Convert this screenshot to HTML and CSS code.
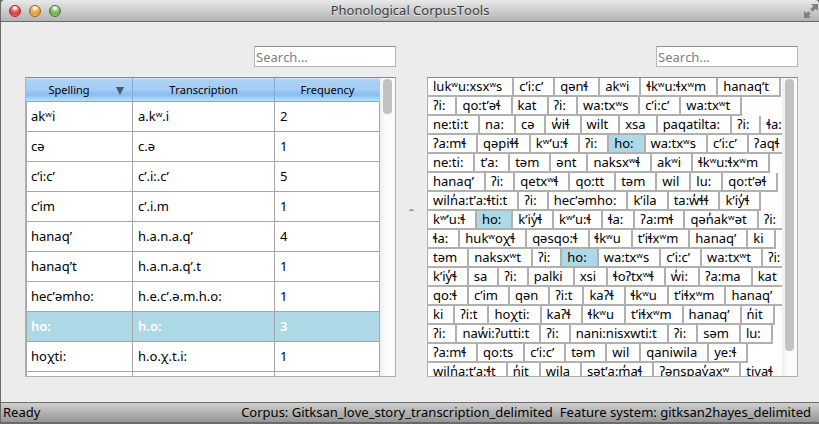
FILE: index.html
```html
<!DOCTYPE html>
<html lang="en">
<head>
<meta charset="utf-8">
<title>Phonological CorpusTools</title>
<link rel="stylesheet" href="styles.css">
</head>
<body>
<div class="window">
  <header class="titlebar">
    <div class="lights">
      <button class="light red" aria-label="Close"></button>
      <button class="light yellow" aria-label="Minimize"></button>
      <button class="light green" aria-label="Zoom"></button>
    </div>
    <h1 class="title">Phonological CorpusTools</h1>
    <button class="fullscreen" aria-label="Full screen">
      <svg width="16" height="16" viewBox="0 0 16 16" fill="#808080"><path d="M8 1h7v7l-2.300-2.300-3 3-2.400-2.400 3-3zM1 8l2.300 2.300 2-2 2.400 2.400-2 2L8 15H1z"/></svg>
    </button>
  </header>
  <main class="content">
    <section class="pane">
      <input class="search" type="text" placeholder="Search..." aria-label="Search corpus">
      <div class="frame">
        <div class="view">
          <table class="corpus">
            <colgroup><col class="c-spell"><col class="c-trans"><col class="c-freq"></colgroup>
            <thead><tr><th class="sorted">Spelling<svg class="arrow" width="10" height="8" viewBox="0 0 10 8"><path d="M1 0h8L5 8z" fill="#46586b"/></svg></th><th>Transcription</th><th>Frequency</th></tr></thead>
            <tbody>
              <tr><td>akʷi</td><td>a.kʷ.i</td><td>2</td></tr>
              <tr><td>cə</td><td>c.ə</td><td>1</td></tr>
              <tr><td>c’i:c’</td><td>c’.i:.c’</td><td>5</td></tr>
              <tr><td>c’im</td><td>c’.i.m</td><td>1</td></tr>
              <tr><td>hanaq’</td><td>h.a.n.a.q’</td><td>4</td></tr>
              <tr><td>hanaq’t</td><td>h.a.n.a.q’.t</td><td>1</td></tr>
              <tr><td>hec’əmho:</td><td>h.e.c’.ə.m.h.o:</td><td>1</td></tr>
              <tr class="selected"><td>ho:</td><td>h.o:</td><td>3</td></tr>
              <tr><td>hoχti:</td><td>h.o.χ.t.i:</td><td>1</td></tr>
              <tr><td></td><td></td><td></td></tr>
            </tbody>
          </table>
        </div>
        <div class="scroll"><div class="thumb short"></div></div>
      </div>
    </section>
    <div class="splitter"><span class="grip"></span></div>
    <section class="pane">
      <input class="search" type="text" placeholder="Search..." aria-label="Search text">
      <div class="frame">
        <div class="view">
          <div class="line"><span>lukʷu:xsxʷs</span><span>c’i:c’</span><span>qənɬ</span><span>akʷi</span><span>ɬkʷu:ɬxʷm</span><span>hanaq’t</span></div>
          <div class="line"><span>ʔi:</span><span>qo:t’əɬ</span><span>kat</span><span>ʔi:</span><span>wa:txʷs</span><span>c’i:c’</span><span>wa:txʷt</span></div>
          <div class="line"><span>ne:ti:t</span><span>na:</span><span>cə</span><span>w̓iɬ</span><span>wilt</span><span>xsa</span><span>paqatilta:</span><span>ʔi:</span><span>ɬa:</span></div>
          <div class="line"><span>ʔa:mɬ</span><span>qəpiɬɬ</span><span>kʷ’u:ɬ</span><span>ʔi:</span><span class="hit">ho:</span><span>wa:txʷs</span><span>c’i:c’</span><span>ʔaqɬ</span></div>
          <div class="line"><span>ne:ti:</span><span>t’a:</span><span>təm</span><span>ənt</span><span>naksxʷɬ</span><span>akʷi</span><span>ɬkʷu:ɬxʷm</span></div>
          <div class="line"><span>hanaq’</span><span>ʔi:</span><span>qetxʷɬ</span><span>qo:tt</span><span>təm</span><span>wil</span><span>lu:</span><span>qo:t’əɬ</span></div>
          <div class="line"><span>wiln̓a:t’a:ɬti:t</span><span>ʔi:</span><span>hec’əmho:</span><span>k’ila</span><span>ta:w̓ɬɬ</span><span>k’iy̓ɬ</span></div>
          <div class="line"><span>kʷ’u:ɬ</span><span class="hit">ho:</span><span>k’iy̓ɬ</span><span>kʷ’u:ɬ</span><span>ɬa:</span><span>ʔa:mɬ</span><span>qən̓akʷət</span><span>ʔi:</span></div>
          <div class="line"><span>ɬa:</span><span>hukʷoχɬ</span><span>qəsqo:ɬ</span><span>ɬkʷu</span><span>t’iɬxʷm</span><span>hanaq’</span><span>ki</span></div>
          <div class="line"><span>təm</span><span>naksxʷt</span><span>ʔi:</span><span class="hit">ho:</span><span>wa:txʷs</span><span>c’i:c’</span><span>wa:txʷt</span><span>ʔi:</span></div>
          <div class="line"><span>k’iy̓ɬ</span><span>sa</span><span>ʔi:</span><span>palki</span><span>xsi</span><span>ɬoʔtxʷɬ</span><span>w̓i:</span><span>ʔa:ma</span><span>kat</span></div>
          <div class="line"><span>qo:ɬ</span><span>c’im</span><span>qən</span><span>ʔi:t</span><span>kaʔɬ</span><span>ɬkʷu</span><span>t’iɬxʷm</span><span>hanaq’</span></div>
          <div class="line"><span>ki</span><span>ʔi:t</span><span>hoχti:</span><span>kaʔɬ</span><span>ɬkʷu</span><span>t’iɬxʷm</span><span>hanaq’</span><span>n̓it</span></div>
          <div class="line"><span>ʔi:</span><span>naw̓i:ʔutti:t</span><span>ʔi:</span><span>nani:nisxwti:t</span><span>ʔi:</span><span>səm</span><span>lu:</span></div>
          <div class="line"><span>ʔa:mɬ</span><span>qo:ts</span><span>c’i:c’</span><span>təm</span><span>wil</span><span>qaniwila</span><span>ye:ɬ</span></div>
          <div class="line"><span>wiln̓a:t’a:ɬt</span><span>n̓it</span><span>wila</span><span>sət’a:m̓aɬ</span><span>ʔənspay̓axʷ</span><span>tiyaɬ</span></div>
        </div>
        <div class="scroll"><div class="thumb long"></div></div>
      </div>
    </section>
  </main>
  <footer class="status">
    <span class="ready">Ready</span>
    <span>Corpus: Gitksan_love_story_transcription_delimited</span>
    <span>Feature system: gitksan2hayes_delimited</span>
  </footer>
</div>
</body>
</html>
```
FILE: styles.css
```css
* { box-sizing: border-box; }
body {
  margin: 0;
  background: #6a6a6a;
  color: #000;
  font: 13px/17px "Noto Sans", "Open Sans", sans-serif;
  font-kerning: none;
}
.window {
  display: flex;
  flex-direction: column;
  height: 100vh;
  padding: 0 0 2px 1px;
}
.titlebar {
  display: grid;
  grid-template-columns: 64px 1fr 64px;
  align-items: center;
  height: 22px;
  flex: none;
  background: linear-gradient(#e9e9e9, #b3b3b3);
  border-bottom: 1px solid #6b6b6b;
  border-radius: 4px 4px 0 0;
}
.lights { display: flex; gap: 8px; padding-left: 8px; }
.light {
  width: 12px;
  height: 12px;
  padding: 0;
  border: 1px solid;
  border-radius: 50%;
}
.red { background: radial-gradient(circle at 50% 20%, #fff 8%, #f0696b 35%, #d93a40 65%, #ff9a98); border-color: #8c3034; }
.yellow { background: radial-gradient(circle at 50% 20%, #fff 8%, #f3b957 35%, #e29b35 65%, #ffe58c); border-color: #8f6426; }
.green { background: radial-gradient(circle at 50% 20%, #fff 8%, #93cc78 35%, #65ad4c 65%, #c4f4a0); border-color: #456f35; }
.title {
  margin: 0;
  font-size: 13px;
  font-weight: 400;
  text-align: center;
  color: #3c3c3c;
  text-shadow: 0 1px 0 #e6e6e6;
}
.fullscreen {
  justify-self: end;
  display: flex;
  padding: 0;
  border: 0;
  background: none;
}
.content {
  flex: 1;
  min-height: 0;
  display: flex;
  padding: 24px 21px 25px 24px;
  background: #ececec;
}
.pane {
  flex: 1;
  min-width: 0;
  display: flex;
  flex-direction: column;
  gap: 10px;
}
.splitter {
  width: 31px;
  display: flex;
  align-items: center;
  justify-content: center;
}
.grip {
  width: 5px;
  height: 5px;
  border-radius: 50%;
  border-top: 2px solid #999;
}
.search {
  align-self: flex-end;
  width: 142px;
  height: 21px;
  padding: 0 1px;
  border: 1px solid #b5b5b5;
  border-top-color: #8f8f8f;
  background: #fff;
  font: inherit;
}
.search::placeholder { color: #808080; opacity: 1; }
.frame {
  flex: 1;
  min-height: 0;
  display: flex;
  background: #fff;
  border: 1px solid #b0b0b0;
  border-top-color: #8a8a8a;
}
.view { flex: 1; min-width: 0; overflow: hidden; }
.scroll {
  width: 15px;
  padding: 1px 3px;
  background: linear-gradient(90deg, #eee, #fcfcfc 40%, #fafafa);
}
.thumb { border-radius: 4px; background: #c2c2c2; }
.short { height: 35px; }
.long { height: 92%; }

.corpus {
  width: 100%;
  table-layout: fixed;
  border-collapse: separate;
  border-spacing: 0;
}
.c-spell { width: 107px; }
.c-freq { width: 105px; }
.corpus th {
  height: 24px;
  padding: 0;
  border-right: 1px solid #8ea4dc;
  border-bottom: 1px solid #76add6;
  background: linear-gradient(#cbe4f7, #a9d0f5 12%, #a6cdf3 50%, #87bcf0 72%, #b8e4fa);
  font-size: 11px;
  font-weight: 400;
}
.corpus th:last-child { border-right: 0; }
.corpus .sorted { position: relative; padding-right: 20px; }
.arrow { position: absolute; right: 7px; top: 9px; }
.corpus td {
  height: 30px;
  padding: 0 5px;
  border-right: 1px solid #a6a6a6;
  border-bottom: 1px solid #a6a6a6;
}
.corpus td:first-child { border-left: 1px solid #a6a6a6; padding-left: 4px; }
.selected td { background: #add8e6; color: #fff; font-weight: 600; }

.line { display: flex; height: 19px; }
.line span {
  flex: none;
  padding: 0 10px 0 5px;
  border-right: 2px solid #b0b0b0;
  border-bottom: 2px solid #b0b0b0;
  white-space: nowrap;
}
.line .hit { background: #add8e6; }

.status {
  flex: none;
  display: flex;
  gap: 7px;
  height: 20px;
  padding: 1px 8px 0 2px;
  border-top: 1px solid #707070;
  background: linear-gradient(#cfcfcf, #969696);
}
.ready { flex: 1; }
```
